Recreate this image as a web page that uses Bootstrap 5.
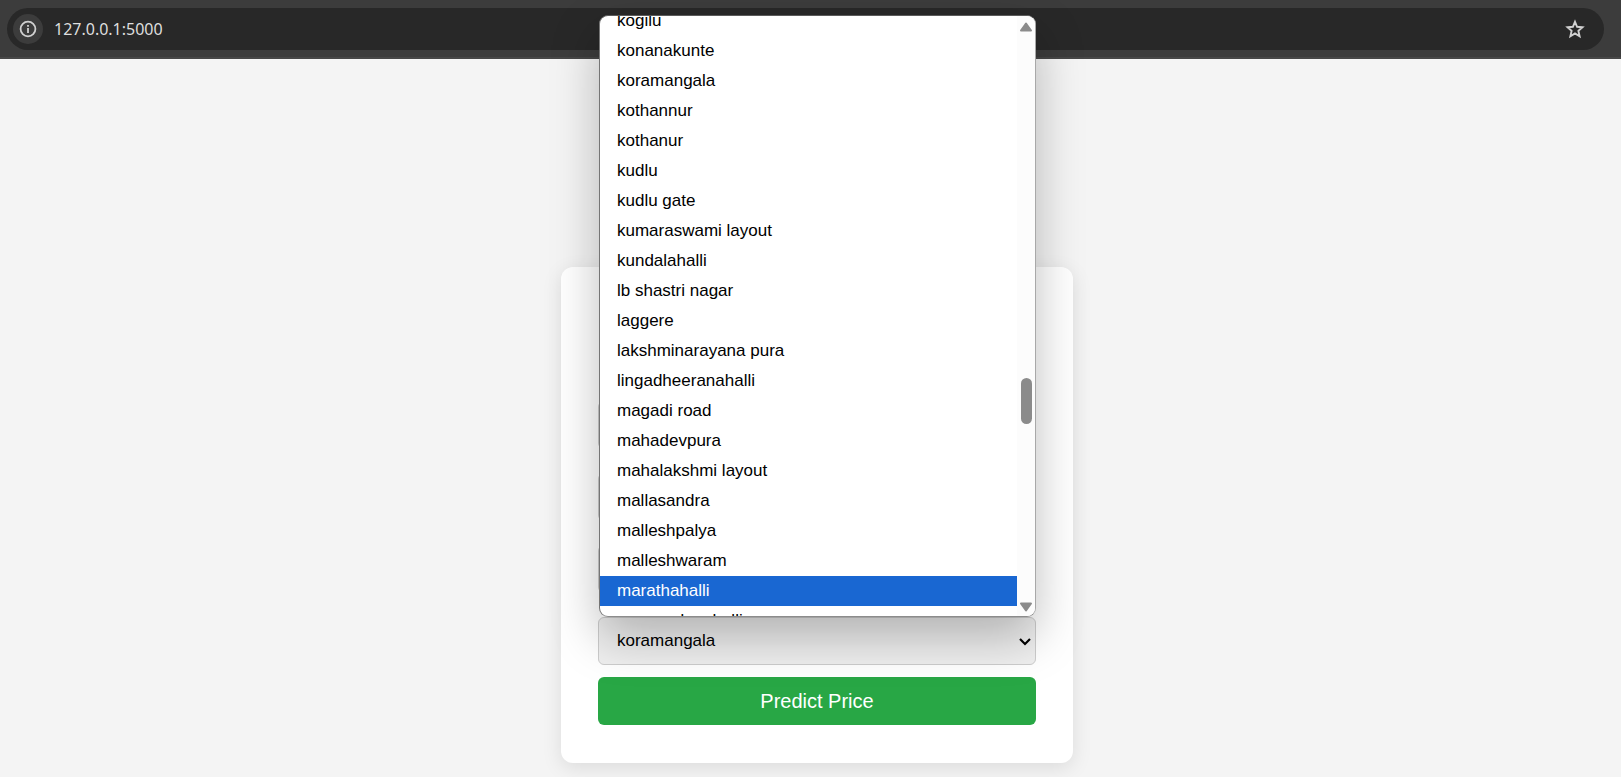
<!DOCTYPE html>
<html lang="en">
<head>
<meta charset="utf-8">
<meta name="viewport" content="width=device-width, initial-scale=1">
<title>Price prediction</title>
<link href="https://cdn.jsdelivr.net/npm/bootstrap@5.3.0/dist/css/bootstrap.min.css" rel="stylesheet">
<style>
  body { background: #f4f4f4; color: #000; font-family: "Liberation Sans", Arial, sans-serif; font-size: 17px; }

  /* Address bar */
  .browser-bar { background: #3c3c3c; border-bottom: 2px solid #474747; padding: 8px 17px 7px 7px; }
  .omnibox { background: #282828; border-radius: 21px; height: 42px; padding: 0 19px 0 6px; }
  .info-btn { width: 30px; height: 30px; background: #3c3c3c; color: #d0d0d0; }
  .star-btn { color: #d0d0d0; }
  .omnibox .url-field { color: #dedede; font-family: "Noto Sans", sans-serif; font-size: 16px; line-height: 24px; padding: 0 0 0 11px; }

  /* Form card */
  .page-area { padding: 0 0 14px 13px; }
  .predict-card { max-width: 512px; min-height: 496px; border-radius: 12px; padding: 38px 37px; box-shadow: 0 5px 20px rgba(0, 0, 0, .1); }
  .field-stack { gap: 24px; }
  .field-box { height: 48px; border: 1px solid #ccc; border-radius: 6px; font-size: 17px; padding: 0 18px; }
  select.field-box {
    color: #000; background-color: #efefef; background-position: right 3px center; background-size: 14px 14px;
    background-image: url("data:image/svg+xml,%3Csvg xmlns='http://www.w3.org/2000/svg' viewBox='0 0 14 14'%3E%3Cpath d='M2 5 7 10 12 5' fill='none' stroke='%23000' stroke-width='2.200'/%3E%3C/svg%3E");
  }
  .predict-btn { height: 48px; margin-top: 12px; border-radius: 6px; background: #28a745; color: #fff; font-size: 20px; }
  .predict-btn:hover { background: #218838; color: #fff; }

  /* Open option list, laid over the card */
  .option-popup {
    position: absolute; left: 1px; right: 0; bottom: 100%; height: 602px; overflow: hidden; z-index: 5;
    background: #fff; border: 1px solid; border-color: #5a5a5a #a8a8a8 #8c8c8c #757575; border-radius: 9px;
    box-shadow: 0 20px 48px rgba(0, 0, 0, .26);
  }
  .option-list { margin-top: -10px; }
  .option-list li { height: 30px; line-height: 30px; padding: 0 17px; white-space: nowrap; }
  .option-list li[aria-selected="true"] { background: #1967d2; color: #fff; }
  .scroll-track { width: 18px; background: #fcfcfc; color: #8b8b8b; padding: 6px 2px 4px; }
  .scroll-thumb { width: 11px; height: 46px; border-radius: 6px; background: #8b8b8b; }
  .space-above { flex: 346 0 0; }
  .space-below { flex: 178 0 0; }
</style>
</head>
<body class="d-flex flex-column min-vh-100">
<header class="browser-bar">
  <div class="omnibox d-flex align-items-center">
    <button type="button" class="info-btn btn p-0 border-0 rounded-circle d-flex align-items-center justify-content-center flex-shrink-0" aria-label="View site information">
      <svg width="18" height="18" viewBox="0 0 18 18" fill="none" stroke="currentColor" stroke-width="1.800"><circle cx="9" cy="9" r="7.400"/><path d="M9 8v5M9 5v1.800"/></svg>
    </button>
    <input class="url-field form-control bg-transparent border-0 shadow-none" type="text" value="127.0.0.1:5000" aria-label="Address">
    <button type="button" class="star-btn btn p-0 border-0 d-flex flex-shrink-0" aria-label="Bookmark this page">
      <svg width="20" height="20" viewBox="0 0 20 20" fill="none" stroke="currentColor" stroke-width="1.900"><path d="M10 2.800 12.100 7.800 17.500 8.300 13.400 11.900 14.600 17.200 10 14.400 5.400 17.200 6.600 11.900 2.500 8.300 7.900 7.800Z"/></svg>
    </button>
  </div>
</header>

<main class="page-area flex-grow-1 d-flex align-items-end justify-content-center">
  <form class="predict-card bg-white w-100 d-flex flex-column justify-content-end">
    <div class="field-stack d-flex flex-column">
      <input class="field-box form-control" type="text" aria-label="Area">
      <input class="field-box form-control" type="text" aria-label="Bedrooms">
      <input class="field-box form-control" type="text" aria-label="Bathrooms">
      <div class="position-relative">
        <select class="field-box form-select" aria-label="Location">
          <option>koramangala</option>
        </select>
        <div class="option-popup d-flex">
          <ul class="option-list list-unstyled mb-0 flex-grow-1" role="listbox" aria-label="Locations">
            <li role="option">kogilu</li>
            <li role="option">konanakunte</li>
            <li role="option">koramangala</li>
            <li role="option">kothannur</li>
            <li role="option">kothanur</li>
            <li role="option">kudlu</li>
            <li role="option">kudlu gate</li>
            <li role="option">kumaraswami layout</li>
            <li role="option">kundalahalli</li>
            <li role="option">lb shastri nagar</li>
            <li role="option">laggere</li>
            <li role="option">lakshminarayana pura</li>
            <li role="option">lingadheeranahalli</li>
            <li role="option">magadi road</li>
            <li role="option">mahadevpura</li>
            <li role="option">mahalakshmi layout</li>
            <li role="option">mallasandra</li>
            <li role="option">malleshpalya</li>
            <li role="option">malleshwaram</li>
            <li role="option" aria-selected="true">marathahalli</li>
            <li role="option">margondanahalli</li>
          </ul>
          <div class="scroll-track d-flex flex-column align-items-center" aria-hidden="true">
            <svg class="flex-shrink-0" width="14" height="10" viewBox="0 0 14 10"><path d="M7 1.500 12 8.500H2Z" fill="currentColor" stroke="currentColor" stroke-width="2" stroke-linejoin="round"/></svg>
            <div class="space-above"></div>
            <div class="scroll-thumb flex-shrink-0"></div>
            <div class="space-below"></div>
            <svg class="flex-shrink-0" width="14" height="10" viewBox="0 0 14 10"><path d="M7 8.500 12 1.500H2Z" fill="currentColor" stroke="currentColor" stroke-width="2" stroke-linejoin="round"/></svg>
          </div>
        </div>
      </div>
    </div>
    <button type="submit" class="predict-btn btn border-0 w-100 p-0">Predict Price</button>
  </form>
</main>
<script src="https://cdn.jsdelivr.net/npm/bootstrap@5.3.0/dist/js/bootstrap.bundle.min.js"></script>
</body>
</html>
